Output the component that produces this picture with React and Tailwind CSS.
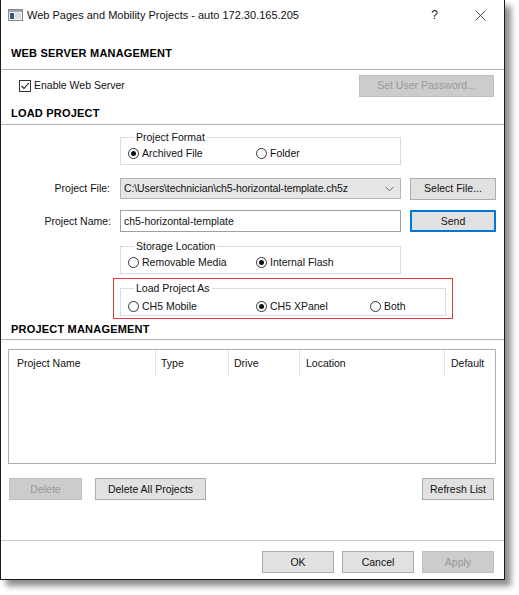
import React from "react";

const FONT = { fontFamily: '"Liberation Sans", Arial, sans-serif' };

function Button({ children, width, disabled, primary }) {
  const base =
    "flex items-center justify-center h-[22px] text-[10.5px] leading-none";
  let look = "bg-[#e1e1e1] border border-[#adadad] text-[#111]";
  if (disabled) look = "bg-[#cccccc] border border-[#bfbfbf] text-[#999999]";
  if (primary) look = "bg-[#e1e1e1] border-2 border-[#0078d7] text-[#111]";
  return (
    <div className={`${base} ${look}`} style={{ width }}>
      {children}
    </div>
  );
}

function Radio({ label, checked, width }) {
  return (
    <div className="flex items-center h-[16px]" style={{ width }}>
      <span className="w-[11px] h-[11px] rounded-full border border-[#333] bg-white flex items-center justify-center">
        {checked && <span className="w-[5px] h-[5px] rounded-full bg-[#111]" />}
      </span>
      <span className="ml-[3px] text-[10.5px] leading-none text-[#111]">{label}</span>
    </div>
  );
}

function Group({ legend, children, width, low }) {
  return (
    <fieldset
      className={`border border-[#dcdcdc] pl-[7px] ${low ? "pb-[1px]" : "pb-[3px]"}`}
      style={{ width }}
    >
      <legend className="ml-[6px] px-[2px] text-[10.5px] leading-[12px] text-[#111]">
        {legend}
      </legend>
      <div className={`flex items-center ${low ? "mt-[4px]" : "mt-[2px]"}`}>{children}</div>
    </fieldset>
  );
}

function Heading({ children, className = "" }) {
  return (
    <div
      className={`pl-[10px] text-[11px] font-bold tracking-[0.2px] leading-[16px] text-black ${className}`}
    >
      {children}
    </div>
  );
}

function WindowIcon() {
  return (
    <svg width="15" height="12" viewBox="0 0 15 12">
      <rect x="0.5" y="0.5" width="14" height="11" fill="#f2f2f2" stroke="#8a8a8a" />
      <rect x="1" y="1" width="13" height="2" fill="#9aa6b8" />
      <rect x="2" y="4" width="4" height="6" fill="#2f5b8a" />
      <rect x="7" y="4" width="6" height="6" fill="#d8dde4" />
    </svg>
  );
}

export default function App() {
  return (
    <div className="w-[519px] h-[595px] bg-white" style={FONT}>
      <div className="w-[505px] h-[580px] bg-white border-l border-r border-b border-[#1a1a1a] shadow-[6px_6px_6px_rgba(0,0,0,0.45)] flex flex-col">
        {/* Title bar */}
        <div className="h-[30px] flex items-center pl-[7px] shrink-0">
          <WindowIcon />
          <span className="ml-[4px] text-[11px] leading-none text-[#111]">
            Web Pages and Mobility Projects - auto 172.30.165.205
          </span>
          <span className="ml-auto text-[12px] leading-none text-[#222] mr-[37px]">?</span>
          <svg width="11" height="11" viewBox="0 0 11 11" className="mr-[18px]">
            <path d="M0.5 0.5 L10.5 10.5 M10.5 0.5 L0.5 10.5" stroke="#333" strokeWidth="0.9" />
          </svg>
        </div>

        {/* Web server management */}
        <Heading className="mt-[15px]">WEB SERVER MANAGEMENT</Heading>
        <div className="mt-[8px] h-px bg-[#b4b4b4]" />
        <div className="mt-[4px] h-[23px] flex items-center pl-[18px] pr-[10px]">
          <span className="w-[12px] h-[12px] border border-[#333] bg-white flex items-center justify-center">
            <svg width="10" height="10" viewBox="0 0 10 10">
              <path d="M1.5 5 L4 7.5 L8.8 2" fill="none" stroke="#222" strokeWidth="1.1" />
            </svg>
          </span>
          <span className="ml-[3px] text-[10.5px] leading-none text-[#111]">Enable Web Server</span>
          <div className="ml-auto">
            <Button width={135} disabled>
              Set User Password...
            </Button>
          </div>
        </div>

        {/* Load project */}
        <Heading className="mt-[8px]">LOAD PROJECT</Heading>
        <div className="mt-[3px] h-px bg-[#b4b4b4]" />

        <div className="mt-[6px] pl-[119px]">
          <Group legend="Project Format" width={281}>
            <Radio label="Archived File" checked width={128} />
            <Radio label="Folder" />
          </Group>
        </div>

        <div className="mt-[13px] flex items-center h-[21px]">
          <span className="w-[109px] text-right text-[10.5px] leading-none text-[#111]">Project File:</span>
          <div className="ml-[10px] w-[281px] h-[21px] bg-[#e6e6e6] border border-[#b5b5b5] flex items-center pl-[3px] pr-[6px]">
            <span className="text-[10.5px] leading-none text-[#111] tracking-[-0.1px]">
              C:\Users\technician\ch5-horizontal-template.ch5z
            </span>
            <svg width="9" height="6" viewBox="0 0 9 6" className="ml-auto">
              <path d="M0.5 0.8 L4.5 4.8 L8.5 0.8" fill="none" stroke="#6a6a6a" strokeWidth="1" />
            </svg>
          </div>
          <div className="ml-[9px]">
            <Button width={86}>Select File...</Button>
          </div>
        </div>

        <div className="mt-[11px] flex items-center h-[22px]">
          <span className="w-[110px] text-right text-[10.5px] leading-none text-[#111]">Project Name:</span>
          <div className="ml-[9px] w-[281px] h-[22px] bg-white border border-[#a0a0a0] flex items-center pl-[3px]">
            <span className="text-[10.5px] leading-none text-[#111]">ch5-horizontal-template</span>
          </div>
          <div className="ml-[9px]">
            <Button width={86} primary>
              Send
            </Button>
          </div>
        </div>

        <div className="mt-[8px] pl-[119px]">
          <Group legend="Storage Location" width={281}>
            <Radio label="Removable Media" width={128} />
            <Radio label="Internal Flash" checked />
          </Group>
        </div>

        <div className="mt-[4px] ml-[112px] w-[340px] border border-[#e0393e] pl-[6px] pr-[6px] pt-[3px] pb-[2px]">
          <Group legend="Load Project As" width={326} low>
            <Radio label="CH5 Mobile" width={128} />
            <Radio label="CH5 XPanel" checked width={114} />
            <Radio label="Both" />
          </Group>
        </div>

        {/* Project management */}
        <Heading className="mt-[2px]">PROJECT MANAGEMENT</Heading>
        <div className="mt-[2px] h-px bg-[#b4b4b4]" />

        <div className="mt-[9px] ml-[7px] w-[488px] h-[115px] border border-[#adadad] bg-white">
          <div className="h-[26px] flex text-[10.5px] leading-none text-[#111]">
            <div className="w-[147px] border-r border-[#e5e5e5] flex items-center pl-[8px]">Project Name</div>
            <div className="w-[73px] border-r border-[#e5e5e5] flex items-center pl-[5px]">Type</div>
            <div className="w-[71px] border-r border-[#e5e5e5] flex items-center pl-[5px]">Drive</div>
            <div className="w-[145px] border-r border-[#e5e5e5] flex items-center pl-[6px]">Location</div>
            <div className="flex-1 flex items-center pl-[6px]">Default</div>
          </div>
        </div>

        <div className="mt-[14px] flex items-center pl-[8px] pr-[10px]">
          <Button width={73} disabled>
            Delete
          </Button>
          <div className="ml-[13px]">
            <Button width={111}>Delete All Projects</Button>
          </div>
          <div className="ml-auto">
            <Button width={72}>Refresh List</Button>
          </div>
        </div>

        <div className="mt-[40px] h-px bg-[#c8c8c8]" />

        <div className="mt-[10px] flex items-center justify-end gap-[8px] pr-[10px]">
          <Button width={72}>OK</Button>
          <Button width={72}>Cancel</Button>
          <Button width={72} disabled>
            Apply
          </Button>
        </div>
      </div>
    </div>
  );
}
